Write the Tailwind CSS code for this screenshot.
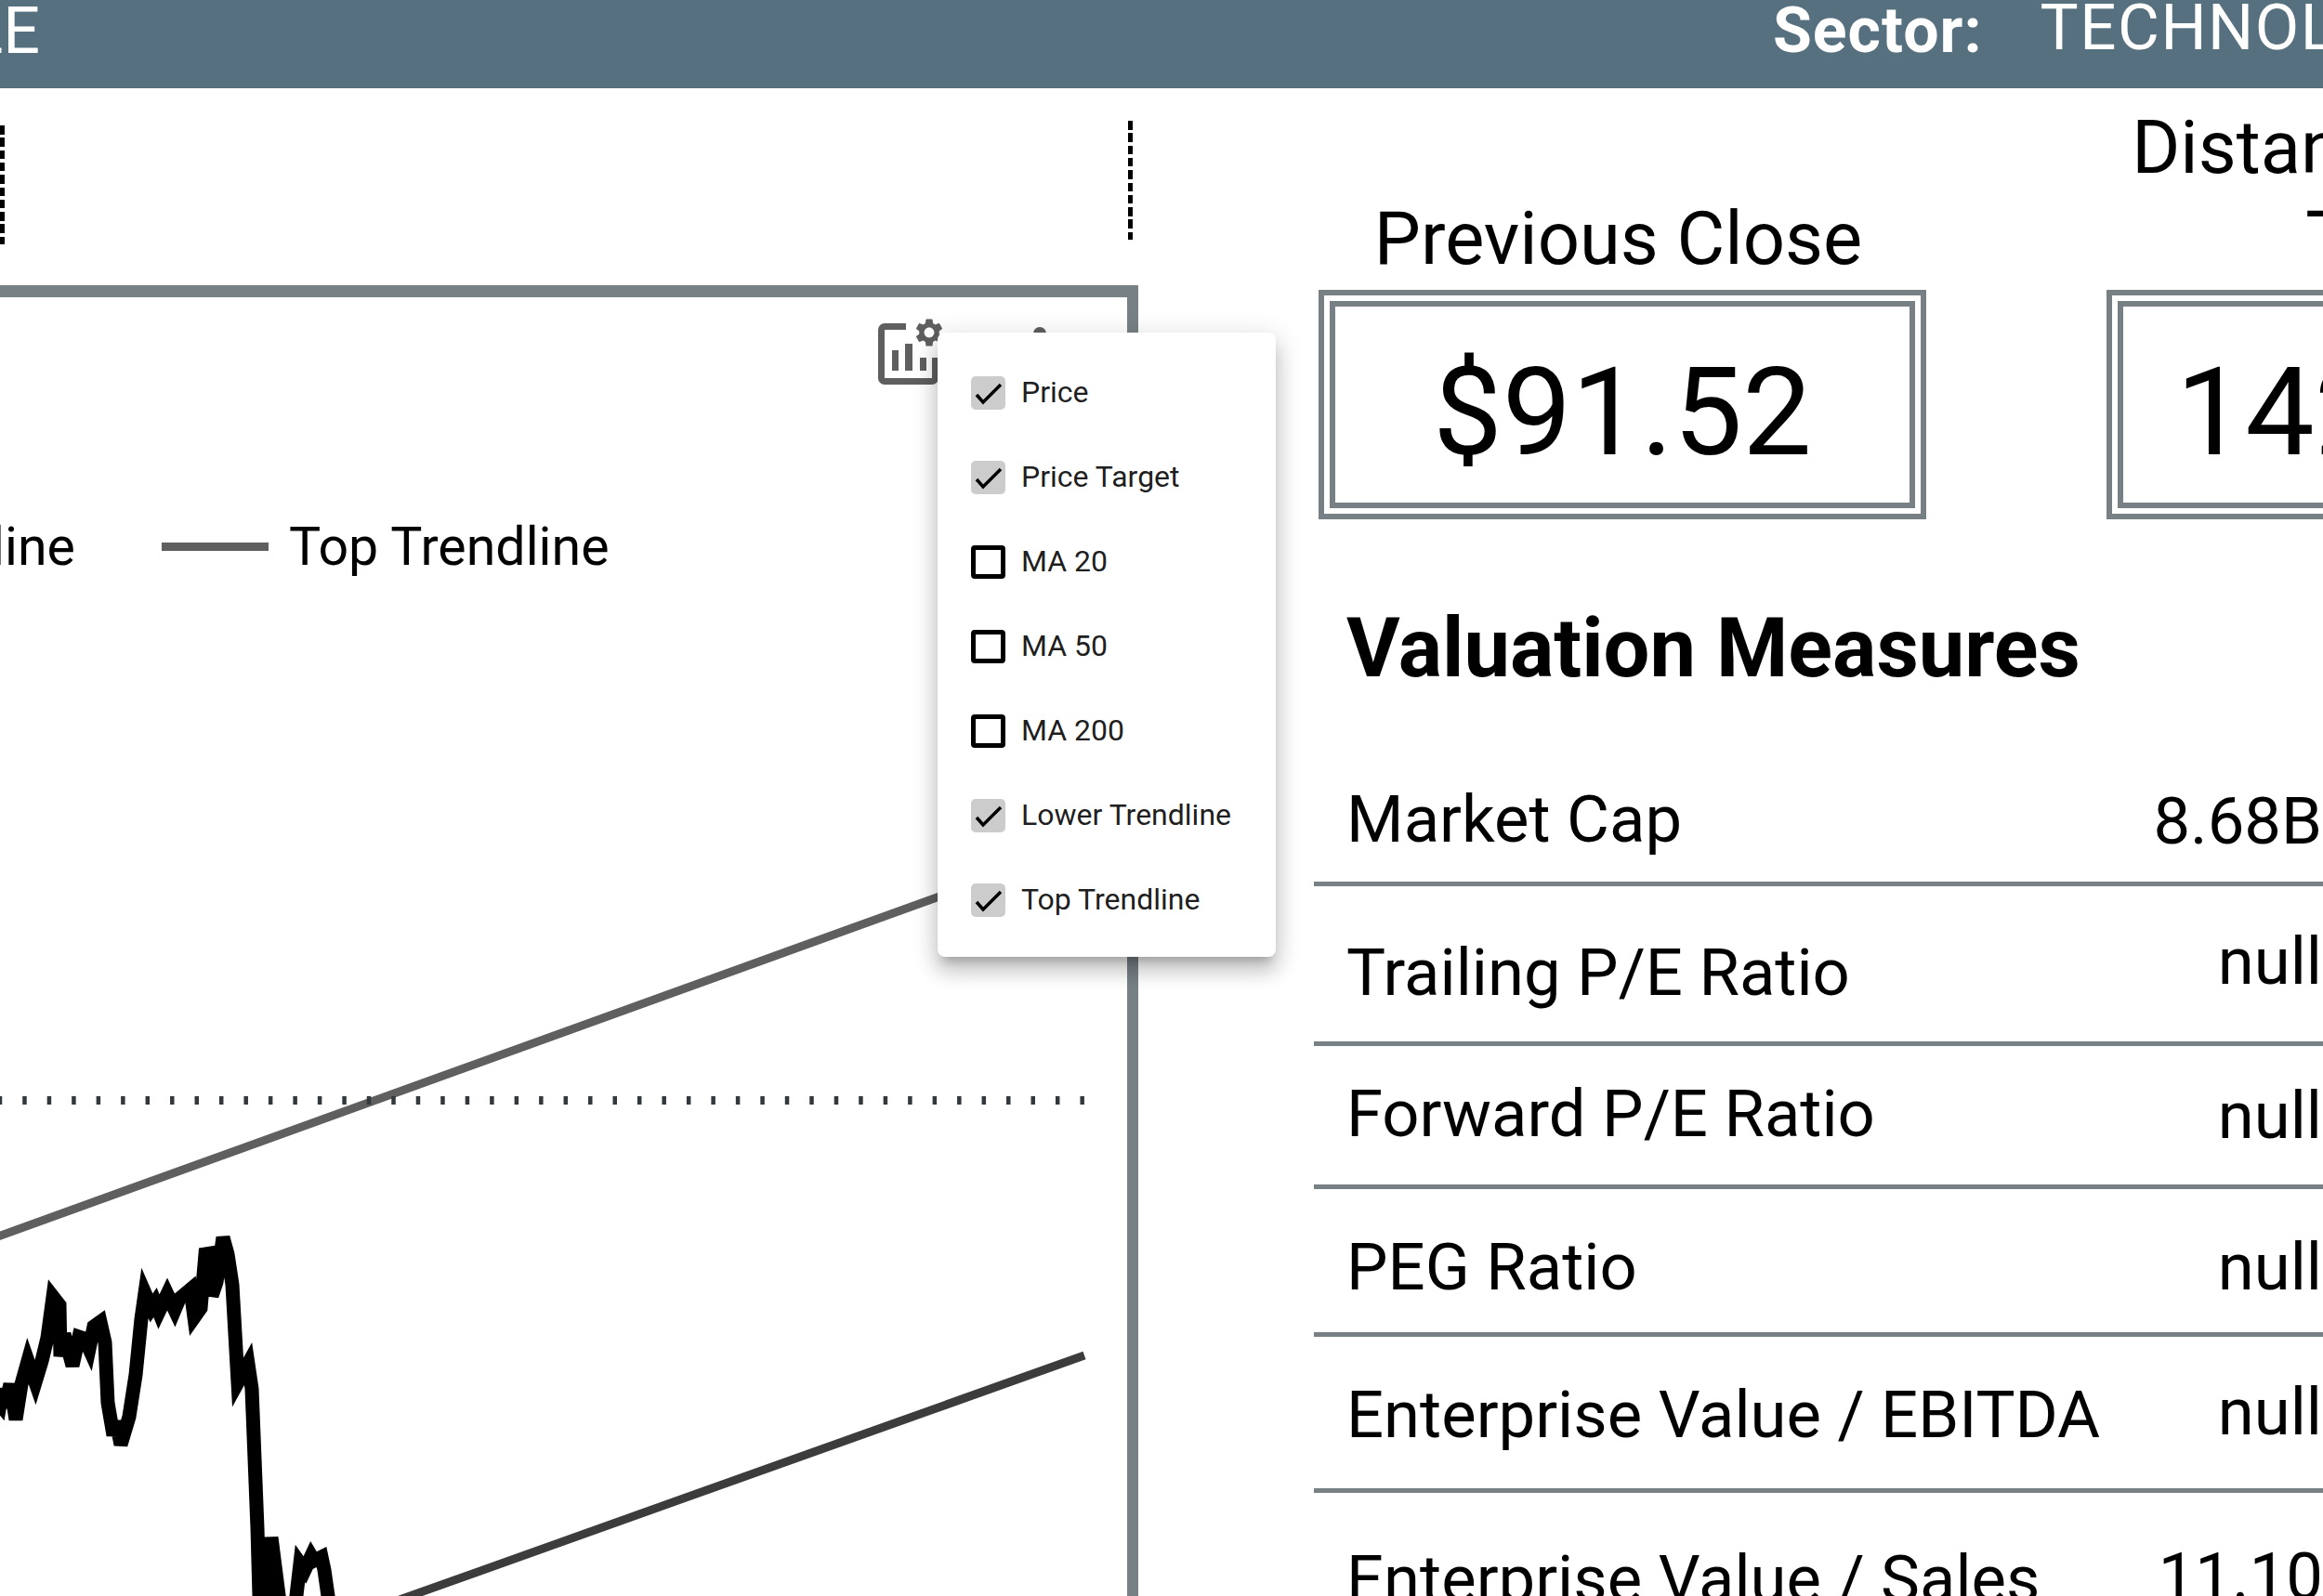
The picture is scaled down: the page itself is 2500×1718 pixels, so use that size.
<!DOCTYPE html>
<html lang="en">
<head>
  <meta charset="UTF-8" />
  <title>Stock Detail</title>
  <script src="https://cdn.jsdelivr.net/npm/@tailwindcss/browser@4"></script>
</head>
<body class="w-[2500px] h-[1718px] overflow-hidden bg-white text-black [font-family:Roboto,sans-serif]">

  <!-- Header bar -->
  <div class="h-[95px] bg-[#56707f] text-white flex items-start overflow-hidden whitespace-nowrap">
    <div class="w-[43px] shrink-0 flex justify-end overflow-hidden text-[70px] leading-none mt-[-2px]"><span>LE</span></div>
    <div class="ml-[1865px] shrink-0 text-[68px] tracking-[1px] font-bold leading-none mt-[-1px]">Sector:</div>
    <div class="ml-[62px] shrink-0 text-[69px] tracking-[1.5px] leading-none mt-[-5px]">TECHNOLOGY</div>
  </div>

  <div class="flex">
    <!-- Left column -->
    <div class="w-[1225px] h-[1623px] shrink-0 flex flex-col pt-[35px]">
      <div class="h-[177px] flex justify-between pr-[6px]">
        <div class="w-[5px] h-[128px] mt-[5px] bg-[repeating-linear-gradient(to_bottom,#000_0,#000_9.5px,transparent_9.5px,transparent_13.3px)]"></div>
        <div class="w-[5px] h-[128px] bg-[repeating-linear-gradient(to_bottom,#000_0,#000_9.5px,transparent_9.5px,transparent_13.3px)]"></div>
      </div>

      <!-- Chart card -->
      <div class="relative flex-1 border-t-[13px] border-r-[12px] border-[#778084]">
        <svg class="absolute left-0 top-[-320px]" width="1213" height="1718" viewBox="0 0 1213 1718" fill="none">
          <line x1="-5" y1="1332" x2="1166" y2="909" stroke="#5f5f5f" stroke-width="9" />
          <line x1="0" y1="1184.5" x2="1167" y2="1184.5" stroke="#33383c" stroke-width="9" stroke-dasharray="4.5 21.97" stroke-dashoffset="2.25" />
          <line x1="430" y1="1722" x2="1167" y2="1459" stroke="#3c3c3c" stroke-width="9" />
          <polyline stroke="#000" stroke-width="15" stroke-linejoin="miter" points="-10,1500 0,1512 3,1495 5,1515 11,1490 17,1528 23,1490 30,1465 38,1488 45,1465 51,1440 57,1396 64,1405 65,1460 69,1436 78,1470 85,1439 91,1441 96,1452 101,1428 108,1423 113,1445 116,1510 122,1545 125,1530 130,1555 139,1525 146,1480 152,1420 156,1392 163,1408 167,1402 171,1412 180,1393 188,1410 193,1398 205,1388 209,1418 216,1408 221,1350 227,1349 228,1395 233,1380 240,1332 245,1350 250,1383 256,1488 267,1468 271,1495 277,1645 281,1790 292,1655 310,1795 323,1683 328,1690 335,1675 338,1680 346,1676 349,1690 354,1725 358,1800" />
        </svg>

        <!-- Toolbar icons -->
        <div class="relative flex items-start pt-[23px] pl-[945px] h-[95px]">
          <svg width="70" height="72" viewBox="0 0 70 72" fill="none">
            <path d="M30 8.5H7a3.5 3.5 0 0 0-3.5 3.5V64a3.5 3.5 0 0 0 3.5 3.5H58a3.5 3.5 0 0 0 3.5-3.5V42" stroke="#5f5f5f" stroke-width="7" />
            <rect x="15" y="34" width="7" height="22" fill="#5f5f5f" />
            <rect x="29" y="27" width="8" height="29" fill="#5f5f5f" />
            <rect x="45" y="42" width="7" height="14" fill="#5f5f5f" />
            <path transform="translate(37 -3) scale(1.5)" fill="#5f5f5f" fill-rule="evenodd" d="M19.14 12.94c.04-.3.06-.61.06-.94 0-.32-.02-.64-.07-.94l2.03-1.58c.18-.14.23-.41.12-.61l-1.92-3.32c-.12-.22-.37-.29-.59-.22l-2.39.96c-.5-.38-1.03-.7-1.62-.94l-.36-2.54c-.04-.24-.24-.41-.48-.41h-3.84c-.24 0-.43.17-.47.41l-.36 2.54c-.59.24-1.13.57-1.62.94l-2.39-.96c-.22-.08-.47 0-.59.22L2.74 8.87c-.12.21-.08.47.12.61l2.03 1.58c-.05.3-.09.63-.09.94s.02.64.07.94l-2.03 1.58c-.18.14-.23.41-.12.61l1.92 3.32c.12.22.37.29.59.22l2.39-.96c.5.38 1.03.7 1.62.94l.36 2.54c.05.24.24.41.48.41h3.84c.24 0 .44-.17.47-.41l.36-2.54c.59-.24 1.13-.56 1.62-.94l2.39.96c.22.08.47 0 .59-.22l1.92-3.32c.12-.22.07-.47-.12-.61l-2.01-1.58zM12 15.6c-1.98 0-3.6-1.62-3.6-3.6s1.62-3.6 3.6-3.6 3.6 1.62 3.6 3.6-1.62 3.6-3.6 3.6z" />
          </svg>
          <svg class="ml-[97px] mt-[9px]" width="14" height="56" viewBox="0 0 14 56" fill="#5f5f5f">
            <circle cx="7" cy="7" r="7" />
            <circle cx="7" cy="28" r="7" />
            <circle cx="7" cy="49" r="7" />
          </svg>
        </div>

        <!-- Legend -->
        <div class="relative flex items-center mt-[145px] text-[57.3px] leading-none whitespace-nowrap">
          <div class="w-[81px] shrink-0 flex justify-end overflow-hidden"><span>Lower Trendline</span></div>
          <div class="ml-[93px] w-[115px] h-[9px] bg-[#5f5f5f]"></div>
          <span class="ml-[22px]">Top Trendline</span>
        </div>

        <!-- Series menu -->
        <div class="absolute left-[1009px] top-[38px] w-[364px] h-[672px] z-10 bg-white rounded-[8px] pt-[19px] text-[32px] text-black/90 shadow-[0_10px_10px_-6px_rgba(0,0,0,0.2),0_16px_20px_2px_rgba(0,0,0,0.14),0_6px_28px_4px_rgba(0,0,0,0.12)]">
          <div class="h-[91px] flex items-center pl-[36px] gap-[17px]">
            <div class="w-[37px] h-[36px] bg-[#cccccc] rounded-[5px]"><svg width="37" height="36" fill="none"><path d="M6 20l7 8L32 9" stroke="#000" stroke-width="3.5" /></svg></div>
            <span class="mt-[-2px]">Price</span>
          </div>
          <div class="h-[91px] flex items-center pl-[36px] gap-[17px]">
            <div class="w-[37px] h-[36px] bg-[#cccccc] rounded-[5px]"><svg width="37" height="36" fill="none"><path d="M6 20l7 8L32 9" stroke="#000" stroke-width="3.5" /></svg></div>
            <span class="mt-[-2px]">Price Target</span>
          </div>
          <div class="h-[91px] flex items-center pl-[36px] gap-[17px]">
            <div class="w-[37px] h-[36px] border-[5px] border-black rounded-[4px]"></div>
            <span class="mt-[-2px]">MA 20</span>
          </div>
          <div class="h-[91px] flex items-center pl-[36px] gap-[17px]">
            <div class="w-[37px] h-[36px] border-[5px] border-black rounded-[4px]"></div>
            <span class="mt-[-2px]">MA 50</span>
          </div>
          <div class="h-[91px] flex items-center pl-[36px] gap-[17px]">
            <div class="w-[37px] h-[36px] border-[5px] border-black rounded-[4px]"></div>
            <span class="mt-[-2px]">MA 200</span>
          </div>
          <div class="h-[91px] flex items-center pl-[36px] gap-[17px]">
            <div class="w-[37px] h-[36px] bg-[#cccccc] rounded-[5px]"><svg width="37" height="36" fill="none"><path d="M6 20l7 8L32 9" stroke="#000" stroke-width="3.5" /></svg></div>
            <span class="mt-[-2px]">Lower Trendline</span>
          </div>
          <div class="h-[91px] flex items-center pl-[36px] gap-[17px]">
            <div class="w-[37px] h-[36px] bg-[#cccccc] rounded-[5px]"><svg width="37" height="36" fill="none"><path d="M6 20l7 8L32 9" stroke="#000" stroke-width="3.5" /></svg></div>
            <span class="mt-[-2px]">Top Trendline</span>
          </div>
        </div>
      </div>
    </div>

    <!-- Right column -->
    <div class="ml-[189px] w-[1100px] shrink-0">
      <div class="flex items-end gap-[194px] pl-[5px] pt-[15px]">
        <div class="w-[654px] shrink-0">
          <div class="text-[79.5px] leading-[97.5px] text-center pr-[9px]">Previous Close</div>
          <div class="h-[247px] mt-[7px] border-[18px] border-double border-[#778084] flex items-center justify-center pt-[18px] text-[132.6px] leading-none">$91.52</div>
        </div>
        <div class="w-[654px] shrink-0">
          <div class="text-[79.5px] leading-[97.5px] text-center">Distance to Price Target</div>
          <div class="h-[247px] mt-[7px] border-[18px] border-double border-[#778084] flex items-center justify-center pt-[18px] text-[132.6px] leading-none">142.13%</div>
        </div>
      </div>

      <div class="mt-[95px] pl-[35px] text-[88.4px] font-bold leading-none">Valuation Measures</div>

      <!-- Valuation table -->
      <div class="mt-[78px] text-[70.6px] leading-none whitespace-nowrap">
        <div class="h-[134px] border-b-[5px] border-[#778084] flex justify-between pl-[35px] pr-[15px]"><span class="pt-[27px]">Market Cap</span><span class="pt-[29px]">8.68B</span></div>
        <div class="h-[172px] border-b-[5px] border-[#778084] flex justify-between pl-[35px] pr-[15px]"><span class="pt-[58px]">Trailing P/E Ratio</span><span class="pt-[46px]">null</span></div>
        <div class="h-[154px] border-b-[5px] border-[#778084] flex justify-between pl-[35px] pr-[15px]"><span class="pt-[38px]">Forward P/E Ratio</span><span class="pt-[40px]">null</span></div>
        <div class="h-[159px] border-b-[5px] border-[#778084] flex justify-between pl-[35px] pr-[15px]"><span class="pt-[49px]">PEG Ratio</span><span class="pt-[49px]">null</span></div>
        <div class="h-[168px] border-b-[5px] border-[#778084] flex justify-between pl-[35px] pr-[15px]"><span class="pt-[49px]">Enterprise Value / EBITDA</span><span class="pt-[46px]">null</span></div>
        <div class="h-[160px] flex justify-between pl-[35px] pr-[14px]"><span class="pt-[58px]">Enterprise Value / Sales</span><span class="pt-[55px]">11.10</span></div>
      </div>
    </div>
  </div>

</body>
</html>
